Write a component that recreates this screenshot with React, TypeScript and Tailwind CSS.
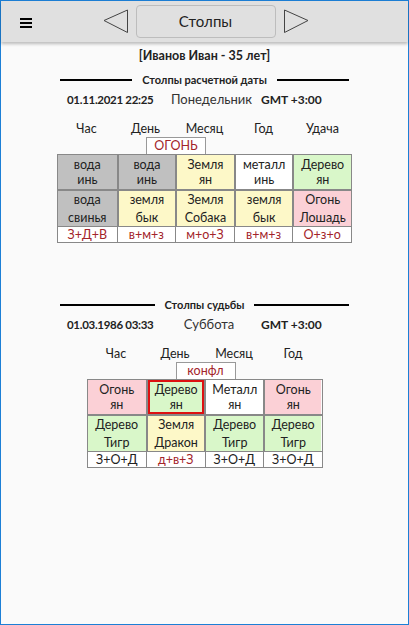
import { ReactNode } from "react";

type Cell = { top: string; bottom: string; bg: string; hl?: boolean };
type Pillar = {
  title: string;
  date: string;
  weekday: string;
  heads: string[];
  label: string;
  row1: Cell[];
  row2: Cell[];
  row3: { text: string; red?: boolean }[];
};

const BG: Record<string, string> = {
  gray: "bg-[#c0c0c0]",
  yellow: "bg-[#fdf8c8]",
  white: "bg-white",
  green: "bg-[#d9f7c9]",
  pink: "bg-[#fbd0d6]",
};

const current: Pillar = {
  title: "Столпы расчетной даты",
  date: "01.11.2021 22:25",
  weekday: "Понедельник",
  heads: ["Час", "День", "Месяц", "Год", "Удача"],
  label: "ОГОНЬ",
  row1: [
    { top: "вода", bottom: "инь", bg: "gray" },
    { top: "вода", bottom: "инь", bg: "gray" },
    { top: "Земля", bottom: "ян", bg: "yellow" },
    { top: "металл", bottom: "инь", bg: "white" },
    { top: "Дерево", bottom: "ян", bg: "green" },
  ],
  row2: [
    { top: "вода", bottom: "свинья", bg: "gray" },
    { top: "земля", bottom: "бык", bg: "yellow" },
    { top: "Земля", bottom: "Собака", bg: "yellow" },
    { top: "земля", bottom: "бык", bg: "yellow" },
    { top: "Огонь", bottom: "Лошадь", bg: "pink" },
  ],
  row3: [
    { text: "З+Д+В", red: true },
    { text: "в+м+з", red: true },
    { text: "м+о+З", red: true },
    { text: "в+м+з", red: true },
    { text: "О+з+о", red: true },
  ],
};

const birth: Pillar = {
  title: "Столпы судьбы",
  date: "01.03.1986 03:33",
  weekday: "Суббота",
  heads: ["Час", "День", "Месяц", "Год"],
  label: "конфл",
  row1: [
    { top: "Огонь", bottom: "ян", bg: "pink" },
    { top: "Дерево", bottom: "ян", bg: "green", hl: true },
    { top: "Металл", bottom: "ян", bg: "white" },
    { top: "Огонь", bottom: "ян", bg: "pink" },
  ],
  row2: [
    { top: "Дерево", bottom: "Тигр", bg: "green" },
    { top: "Земля", bottom: "Дракон", bg: "yellow" },
    { top: "Дерево", bottom: "Тигр", bg: "green" },
    { top: "Дерево", bottom: "Тигр", bg: "green" },
  ],
  row3: [
    { text: "З+О+Д" },
    { text: "д+в+З", red: true },
    { text: "З+О+Д" },
    { text: "З+О+Д" },
  ],
};

const Title = ({ children }: { children: ReactNode }) => (
  <div className="flex items-center w-[289px] mx-auto">
    <div className="flex-1 h-[2px] bg-black" />
    <span className="px-[10px] text-[11px] font-bold leading-[14px]">{children}</span>
    <div className="flex-1 h-[2px] bg-black" />
  </div>
);

const Table = ({ p }: { p: Pillar }) => {
  const w = p.heads.length * 59;
  return (
    <div className="mx-auto" style={{ width: w }}>
      <div className="flex h-[17px] items-end">
        {p.heads.map((h) => (
          <div key={h} className="w-[59px] text-center text-[12.5px] leading-[16px]">
            {h}
          </div>
        ))}
      </div>
      <div className="ml-[89px] w-[60px] h-[17px] border border-b-0 border-[#999] bg-white text-center text-[12.5px] leading-[16px] text-[#a3242a]">
        {p.label}
      </div>
      <div className="border border-[#888]">
        <div className="flex border-b-2 border-[#888]">
          {p.row1.map((c, i) => (
            <div
              key={i}
              className={`relative w-[59px] h-[34px] flex flex-col justify-center text-center text-[12.5px] leading-[15px] ${BG[c.bg]} ${
                i > 0 ? "border-l-2 border-[#888]" : ""
              }`}
            >
              {c.hl && <div className="absolute inset-0 border-2 border-[#dd1111]" />}
              <span>{c.top}</span>
              <span>{c.bottom}</span>
            </div>
          ))}
        </div>
        <div className="flex border-b border-[#888]">
          {p.row2.map((c, i) => (
            <div
              key={i}
              className={`w-[59px] h-[35px] flex flex-col justify-center text-center text-[12.5px] leading-[18px] ${BG[c.bg]} ${
                i > 0 ? "border-l-2 border-[#888]" : ""
              }`}
            >
              <span>{c.top}</span>
              <span>{c.bottom}</span>
            </div>
          ))}
        </div>
        <div className="flex bg-white">
          {p.row3.map((c, i) => (
            <div
              key={i}
              className={`w-[59px] h-[15px] text-center text-[12.5px] leading-[15px] ${
                c.red ? "text-[#a3242a]" : "text-[#222]"
              } ${i > 0 ? "border-l border-[#888]" : ""}`}
            >
              {c.text}
            </div>
          ))}
        </div>
      </div>
    </div>
  );
};

const Section = ({ p }: { p: Pillar }) => (
  <div className="flex flex-col">
    <Title>{p.title}</Title>
    <div className="flex items-center h-[16px] mt-[5px] pl-[66px] text-[13px]">
      <span className="w-[104px] font-bold text-[11.5px] tracking-[-0.3px]">{p.date}</span>
      <span className="w-[76px] text-center text-[#333]">{p.weekday}</span>
      <span className="ml-[14px] font-bold text-[12px]">GMT +3:00</span>
    </div>
    <div className="mt-[12px]">
      <Table p={p} />
    </div>
  </div>
);

export default function App() {
  return (
    <div
      className="w-[409px] h-[625px] flex flex-col bg-[#fafafa] border border-[#1c7fd6] text-[#222]"
      style={{ fontFamily: 'Lato, "Noto Sans", sans-serif' }}
    >
      <div className="relative h-[41px] flex items-center bg-[#e0e0e0] shadow-[0_2px_3px_rgba(0,0,0,0.25)]">
        <div className="absolute left-[19px] top-[17px] flex flex-col gap-[2px]">
          <div className="w-[12px] h-[2px] bg-black" />
          <div className="w-[12px] h-[2px] bg-black" />
          <div className="w-[12px] h-[2px] bg-black" />
        </div>
        <div className="flex items-center mx-auto gap-[7px] pl-[2px]">
          <svg width="26" height="25" viewBox="0 0 26 25">
            <path d="M24.5 1 L1 11.5 L24.5 23.5 Z" fill="none" stroke="#444" strokeWidth="1" />
          </svg>
          <button className="w-[140px] h-[33px] rounded-[4px] border border-[#bdbdbd] bg-[#e0e0e0] text-[15px] text-[#222]">
            Столпы
          </button>
          <svg width="26" height="25" viewBox="0 0 26 25">
            <path d="M1.5 1 L25 11.5 L1.5 23.5 Z" fill="none" stroke="#444" strokeWidth="1" />
          </svg>
        </div>
      </div>
      <div className="mt-[6px] text-center text-[12.5px] font-bold leading-[16px]">
        [Иванов Иван - 35 лет]
      </div>
      <div className="mt-[9px]">
        <Section p={current} />
      </div>
      <div className="mt-[55px]">
        <Section p={birth} />
      </div>
    </div>
  );
}
